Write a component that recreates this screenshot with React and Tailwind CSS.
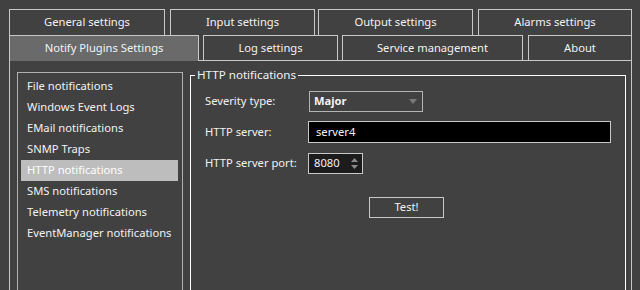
import React from 'react';

const topTabs = [
  { label: 'General settings', cls: 'w-[156px]' },
  { label: 'Input settings', cls: 'w-[145px] ml-[5px]' },
  { label: 'Output settings', cls: 'w-[155px] ml-[3px]' },
  { label: 'Alarms settings', cls: 'w-[154px] ml-[5px]' },
];

const bottomTabs = [
  { label: 'Notify Plugins Settings', cls: 'w-[190px]', active: true },
  { label: 'Log settings', cls: 'w-[135px] ml-[4px]' },
  { label: 'Service management', cls: 'w-[181px] ml-[4px]' },
  { label: 'About', cls: 'w-[104px] ml-[5px]' },
];

const plugins = [
  'File notifications',
  'Windows Event Logs',
  'EMail notifications',
  'SNMP Traps',
  'HTTP notifications',
  'SMS notifications',
  'Telemetry notifications',
  'EventManager notifications',
];

export default function App() {
  return (
    <div
      className="w-[640px] h-[290px] overflow-hidden bg-[#414141] text-[#f2f2f2] text-[11.2px] whitespace-nowrap"
      style={{ fontFamily: '"Noto Sans", "Open Sans", sans-serif' }}
    >
      <div className="pt-[9px] pl-[9px]">
        {/* top tab row */}
        <div className="flex h-[26px]">
          {topTabs.map((t) => (
            <div
              key={t.label}
              className={`${t.cls} shrink-0 border border-b-0 border-[#c8c8c8] flex items-center justify-center`}
            >
              {t.label}
            </div>
          ))}
        </div>

        {/* second tab row */}
        <div className="flex h-[25px]">
          {bottomTabs.map((t) => (
            <div
              key={t.label}
              className={`${t.cls} shrink-0 border border-b-0 border-[#c8c8c8] flex items-center justify-center ${t.active ? 'bg-[#6a6a6a] relative z-10 h-[26px]' : ''}`}
            >
              {t.label}
            </div>
          ))}
        </div>

        {/* panel */}
        <div className="w-[623px] h-[240px] border border-[#c8c8c8] flex pl-[7px] pt-[11px]">
          {/* plugin list */}
          <div className="w-[166px] h-[240px] shrink-0 border border-[#b0b0b0] pt-[3px] px-[3px]">
            {plugins.map((p) => (
              <div
                key={p}
                className={`h-[21px] flex items-center pl-[6px] ${p === 'HTTP notifications' ? 'bg-[#bdbdbd] text-white w-[157px]' : ''}`}
              >
                {p}
              </div>
            ))}
          </div>

          {/* group box */}
          <fieldset className="ml-[7px] -mt-[5px] w-[433px] h-[240px] shrink-0 border border-white px-[14px]">
            <legend className="-ml-[10px] px-[2px] leading-[16px] text-[11.6px]">HTTP notifications</legend>

            <div className="flex items-center mt-[7px] h-[22px]">
              <div className="w-[104px]">Severity type:</div>
              <div className="w-[114px] h-[21px] border border-[#b4b4b4] flex items-center justify-between pl-[4px] pr-[5px]">
                <span className="font-bold">Major</span>
                <svg width="8" height="5" viewBox="0 0 8 5">
                  <path d="M0 0 H8 L4 5 Z" fill="#7a7a7a" />
                </svg>
              </div>
            </div>

            <div className="flex items-center mt-[9px] h-[22px]">
              <div className="w-[103px]">HTTP server:</div>
              <div className="w-[303px] h-[22px] bg-black border border-[#c8c8c8] flex items-center pl-[7px]">
                server4
              </div>
            </div>

            <div className="flex items-center mt-[9px] h-[22px]">
              <div className="w-[103px]">HTTP server port:</div>
              <div className="w-[55px] h-[21px] bg-[#1c1c1c] border border-[#c8c8c8] flex items-center justify-between pl-[5px] pr-[4px]">
                <span>8080</span>
                <svg width="7" height="13" viewBox="0 0 7 13">
                  <path d="M0 5 L3.5 1 L7 5 Z" fill="#8a8a8a" />
                  <path d="M0 8 L3.5 12 L7 8 Z" fill="#8a8a8a" />
                </svg>
              </div>
            </div>

            <div className="flex justify-center mt-[23px]">
              <button className="w-[75px] h-[21px] border border-[#c8c8c8] flex items-center justify-center mr-[3px]">
                Test!
              </button>
            </div>
          </fieldset>
        </div>
      </div>
    </div>
  );
}
